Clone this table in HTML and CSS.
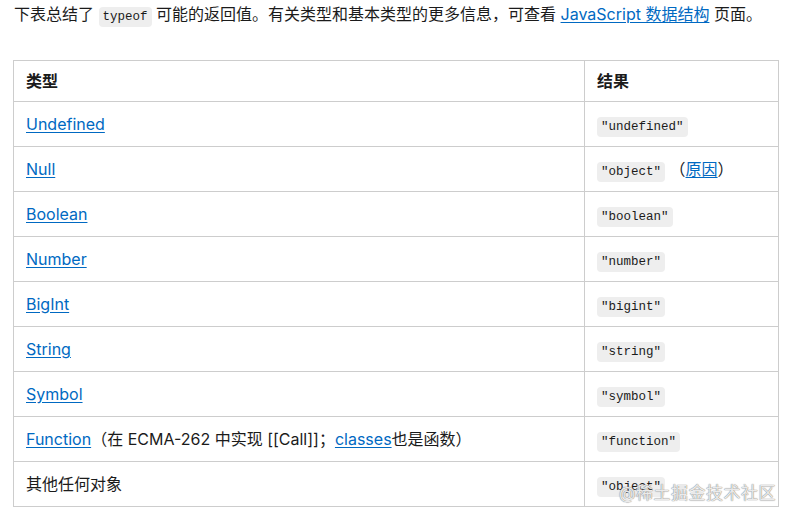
FILE: index.html
```html
<!DOCTYPE html>
<html lang="zh-CN">
<head>
<meta charset="utf-8">
<link rel="stylesheet" href="styles.css">
</head>
<body>
<div class="page">
  <p class="intro">下表总结了 <code>typeof</code> 可能的返回值。有关类型和基本类型的更多信息，可查看 <a href="#">JavaScript 数据结构</a> 页面。</p>
  <table class="types">
    <thead>
      <tr><th class="c1">类型</th><th class="c2">结果</th></tr>
    </thead>
    <tbody>
      <tr><td><a href="#">Undefined</a></td><td><code>"undefined"</code></td></tr>
      <tr><td><a href="#">Null</a></td><td><code>"object"</code> （<a href="#">原因</a>）</td></tr>
      <tr><td><a href="#">Boolean</a></td><td><code>"boolean"</code></td></tr>
      <tr><td><a href="#">Number</a></td><td><code>"number"</code></td></tr>
      <tr><td><a href="#">BigInt</a></td><td><code>"bigint"</code></td></tr>
      <tr><td><a href="#">String</a></td><td><code>"string"</code></td></tr>
      <tr><td><a href="#">Symbol</a></td><td><code>"symbol"</code></td></tr>
      <tr><td><a href="#">Function</a>（在 ECMA-262 中实现 [[Call]]；<a href="#">classes</a>也是函数）</td><td><code>"function"</code></td></tr>
      <tr><td>其他任何对象</td><td><code>"object"</code></td></tr>
    </tbody>
  </table>
  <div class="watermark">@稀土掘金技术社区</div>
</div>
</body>
</html>
```

FILE: styles.css
```css
html, body {
  margin: 0;
  padding: 0;
  background: #fff;
}
body {
  font-family: Inter, "Noto Sans CJK SC", sans-serif;
  font-size: 16px;
  color: #1b1b1b;
}
.page {
  position: relative;
  width: 791px;
  height: 520px;
  padding: 2px 0 0 13px;
  box-sizing: border-box;
  overflow: hidden;
}
.intro {
  margin: 0 0 34px 1px;
  line-height: 24px;
  height: 24px;
}
a {
  color: #0069c2;
  text-decoration: underline;
  text-underline-offset: 2px;
}
code {
  font-family: "Liberation Mono", "DejaVu Sans Mono", monospace;
  font-size: 12.5px;
  line-height: 1;
  background: #eeeeee;
  border-radius: 4px;
  padding: 3px 4px;
  color: #1b1b1b;
}
.types {
  border-collapse: collapse;
  width: 766px;
  table-layout: fixed;
}
.types th, .types td {
  border: 1px solid #cdcdcd;
  text-align: left;
  line-height: 24px;
  height: 24px;
  padding: 10px 12px;
  vertical-align: middle;
}
.types th {
  font-weight: 600;
  padding: 8px 12px;
}
.types tr {
  height: 45px;
}
.types thead tr {
  height: 41px;
}
.types .c1 { width: 546px; }
.watermark {
  position: absolute;
  right: 15px;
  top: 482px;
  font-size: 17px;
  line-height: 22px;
  color: rgba(255, 255, 255, 0.85);
  text-shadow: 0 0 1px #777, 0 0 1px #999;
  letter-spacing: 0.5px;
}
```
